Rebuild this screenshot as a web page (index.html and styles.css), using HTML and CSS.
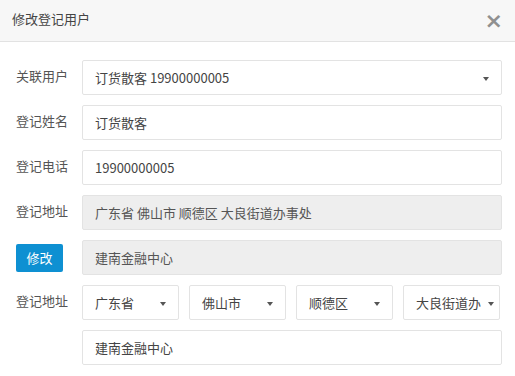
FILE: index.html
```html
<!DOCTYPE html>
<html lang="zh-CN">
<head>
  <meta charset="UTF-8">
  <title>修改登记用户</title>
  <link rel="stylesheet" href="styles.css">
</head>
<body>
  <div class="modal">
    <div class="modal-hd">
      <span class="modal-title">修改登记用户</span>
      <span class="modal-close">&times;</span>
    </div>

    <div class="modal-bd">
      <div class="form-row">
        <label class="form-label">关联用户</label>
        <div class="field select">订货散客 19900000005<span class="caret"></span></div>
      </div>
      <div class="form-row">
        <label class="form-label">登记姓名</label>
        <div class="field">订货散客</div>
      </div>
      <div class="form-row">
        <label class="form-label">登记电话</label>
        <div class="field">19900000005</div>
      </div>
      <div class="form-row">
        <label class="form-label">登记地址</label>
        <div class="field disabled">广东省 佛山市 顺德区 大良街道办事处</div>
      </div>
      <div class="form-row">
        <div class="form-label"><button class="btn-primary">修改</button></div>
        <div class="field disabled">建南金融中心</div>
      </div>
      <div class="form-row">
        <label class="form-label">登记地址</label>
        <div class="select-group">
          <div class="field select">广东省<span class="caret"></span></div>
          <div class="field select">佛山市<span class="caret"></span></div>
          <div class="field select">顺德区<span class="caret"></span></div>
          <div class="field select narrow">大良街道办<span class="caret"></span></div>
        </div>
      </div>
      <div class="form-row">
        <div class="form-label"></div>
        <div class="field">建南金融中心</div>
      </div>
    </div>
  </div>
</body>
</html>
```

FILE: styles.css
```css
* {
  box-sizing: border-box;
  margin: 0;
  padding: 0;
}

body {
  font-family: "Noto Sans CJK SC", "Liberation Sans", sans-serif;
  font-size: 13px;
  color: #444;
  background-color: #fff;
}

.modal-hd {
  height: 42px;
  padding: 0 12px;
  display: flex;
  align-items: center;
  justify-content: space-between;
  background-color: #f7f7f7;
  border-bottom: 1px solid #e2e2e2;
}

.modal-title {
  font-size: 13px;
  color: #444;
  margin-top: -5px;
}

.modal-close {
  font-family: "DejaVu Sans", sans-serif;
  font-size: 22px;
  font-weight: bold;
  color: #909090;
  line-height: 1;
}

.modal-bd {
  padding: 18px 13px 0 16px;
  display: flex;
  flex-direction: column;
  gap: 10px;
}

.form-row {
  display: grid;
  grid-template-columns: 66px 420px;
  align-items: center;
}

.form-label {
  color: #555;
  font-size: 13px;
  margin-top: -4px;
}

.field {
  height: 35px;
  padding: 0 12px;
  display: flex;
  align-items: center;
  border: 1px solid #e3e3e3;
  border-radius: 2px;
  background-color: #fff;
  color: #444;
  white-space: nowrap;
  overflow: hidden;
}

.field.disabled {
  background-color: #eee;
  color: #555;
}

.select {
  position: relative;
  padding-right: 24px;
}

.caret {
  position: absolute;
  right: 12px;
  top: 16px;
  width: 0;
  height: 0;
  border-left: 3px solid transparent;
  border-right: 3px solid transparent;
  border-top: 4px solid #555;
}

.select-group {
  display: grid;
  grid-template-columns: repeat(4, 97px);
  gap: 10px;
}

.select.narrow {
  padding-right: 10px;
}

.select.narrow .caret {
  right: 5px;
}

.btn-primary {
  font-family: inherit;
  font-size: 13px;
  color: #fff;
  background-color: #0e90d2;
  border: none;
  border-radius: 2px;
  width: 47px;
  height: 28px;
  margin-top: 4px;
}
```
